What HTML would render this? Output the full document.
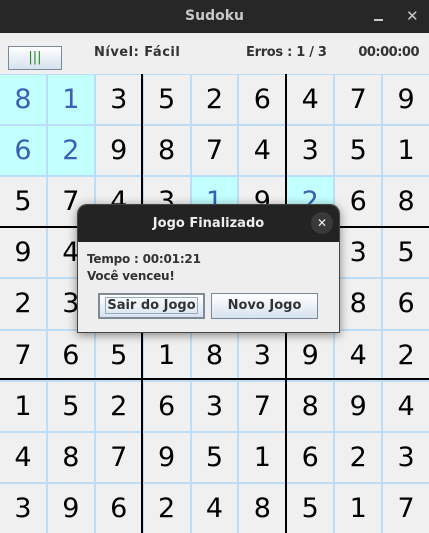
<!DOCTYPE html><html><head><style>
*{margin:0;padding:0;box-sizing:border-box}
body{width:429px;height:533px;overflow:hidden;background:#efefef;font-family:"DejaVu Sans","Liberation Sans",sans-serif;position:relative}
.tb{position:absolute;left:0;top:0;width:429px;height:33px;background:#272727;color:#c8c8c8;font-weight:bold;font-size:14px;text-align:center;line-height:33px}
.hdr{position:absolute;top:34px;left:0;width:429px;height:40px;background:#efefef;font-size:13px;font-weight:bold;color:#333}
.grid{position:absolute;left:0;top:74px;width:429px;height:459px;background:#bddcf5;display:grid;grid-template-columns:repeat(9,1fr);grid-template-rows:repeat(9,1fr);gap:2px;padding-top:1px}
.grid div{background:#f0f0f0;display:flex;align-items:center;justify-content:center;font-size:27px;color:#000}
.grid div.c{background:#c2ffff;color:#3a5fb5}
.v{position:absolute;top:74px;width:2px;height:459px;background:#000}
.h{position:absolute;left:0;width:429px;height:2px;background:#000}
.btn{position:absolute;border:1px solid #7a8a9c;background:linear-gradient(#ffffff,#d6e2ef);font-size:13px;font-weight:bold;color:#333;text-align:center}
</style></head><body>
<div class="tb">Sudoku<span style="position:absolute;left:374px;top:19px;width:9px;height:2px;background:#c8c8c8"></span><span style="position:absolute;left:406px;font-weight:normal;font-size:15px">✕</span></div>
<div class="hdr">
<div class="btn" style="left:8px;top:12px;width:54px;height:24px;line-height:22px;font-weight:normal;color:#228822;font-size:13px">|||</div>
<span style="position:absolute;left:94px;top:11px;letter-spacing:0.5px">Nível: Fácil</span>
<span style="position:absolute;left:246px;top:11px;letter-spacing:-0.3px">Erros : 1 / 3</span>
<span style="position:absolute;right:10px;top:11px;letter-spacing:-0.5px">00:00:00</span>
</div>
<div class="grid">
<div class="c">8</div><div class="c">1</div><div>3</div><div>5</div><div>2</div><div>6</div><div>4</div><div>7</div><div>9</div>
<div class="c">6</div><div class="c">2</div><div>9</div><div>8</div><div>7</div><div>4</div><div>3</div><div>5</div><div>1</div>
<div>5</div><div>7</div><div>4</div><div>3</div><div class="c">1</div><div>9</div><div class="c">2</div><div>6</div><div>8</div>
<div>9</div><div>4</div><div>1</div><div>7</div><div>6</div><div>2</div><div>7</div><div>3</div><div>5</div>
<div>2</div><div>3</div><div>8</div><div>4</div><div>9</div><div>5</div><div>1</div><div>8</div><div>6</div>
<div>7</div><div>6</div><div>5</div><div>1</div><div>8</div><div>3</div><div>9</div><div>4</div><div>2</div>
<div>1</div><div>5</div><div>2</div><div>6</div><div>3</div><div>7</div><div>8</div><div>9</div><div>4</div>
<div>4</div><div>8</div><div>7</div><div>9</div><div>5</div><div>1</div><div>6</div><div>2</div><div>3</div>
<div>3</div><div>9</div><div>6</div><div>2</div><div>4</div><div>8</div><div>5</div><div>1</div><div>7</div>
</div>
<div class="v" style="left:141px"></div><div class="v" style="left:285px"></div>
<div class="h" style="top:226px"></div><div class="h" style="top:378px"></div>
<div style="position:absolute;left:77px;top:204px;width:263px;height:129px;border-radius:10px 10px 0 0;box-shadow:0 2px 10px rgba(0,0,0,.45);background:#eeeeee;border:1px solid #444;overflow:hidden">
<div style="height:37px;background:#232323;color:#eee;font-weight:bold;font-size:13px;text-align:center;line-height:37px">Jogo Finalizado
<span style="position:absolute;right:6px;top:7px;width:22px;height:22px;border-radius:50%;background:#3a3a3a;line-height:22px;font-size:12px;font-weight:normal">✕</span></div>
<div style="position:absolute;left:9px;top:46px;font-size:12px;font-weight:bold;color:#333;line-height:17px;letter-spacing:-0.2px">Tempo : 00:01:21<br>Você venceu!</div>
<div class="btn" style="left:20px;top:88px;width:107px;height:26px;line-height:22px;border:2px solid #7d8b99"><span style="border:1px solid #9ab;padding:0 1px">Sair do Jogo</span></div>
<div class="btn" style="left:133px;top:88px;width:107px;height:26px;line-height:24px">Novo Jogo</div>
</div>
</body></html>
